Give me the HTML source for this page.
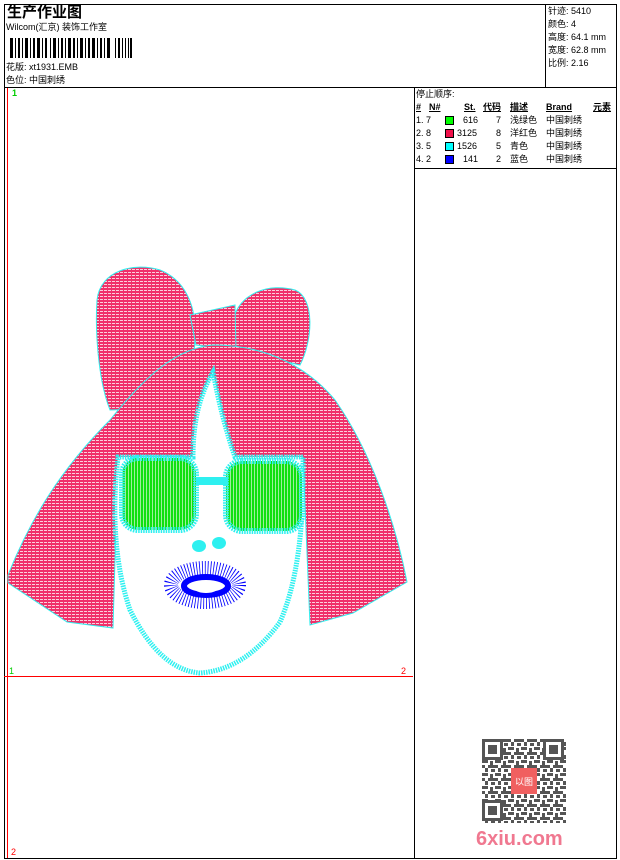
<!DOCTYPE html>
<html><head><meta charset="utf-8"><style>
*{margin:0;padding:0}
body{width:620px;height:860px;background:#fff;position:relative;overflow:hidden;font-family:"Liberation Sans","WenQuanYi Zen Hei","Noto Sans CJK SC",sans-serif;font-size:9px;color:#000}
.a{position:absolute;white-space:nowrap;line-height:11px}
.l{position:absolute;background:#000}
.r{position:absolute;background:#f00}
.u{text-decoration:underline;font-weight:bold}
.sw{position:absolute;width:9px;height:9px;border:1px solid #000;box-sizing:border-box}
</style></head><body>
<div class="l" style="left:4px;top:4px;width:613px;height:1px"></div>
<div class="l" style="left:4px;top:858px;width:613px;height:1px"></div>
<div class="l" style="left:4px;top:4px;width:1px;height:855px"></div>
<div class="l" style="left:616px;top:4px;width:1px;height:855px"></div>
<div class="l" style="left:4px;top:87px;width:613px;height:1px"></div>
<div class="l" style="left:545px;top:4px;width:1px;height:83px"></div>
<div class="l" style="left:414px;top:87px;width:1px;height:772px"></div>
<div class="l" style="left:414px;top:168px;width:203px;height:1px"></div>
<div class="r" style="left:7px;top:88px;width:1px;height:770px"></div>
<div class="r" style="left:4px;top:676px;width:409px;height:1px"></div>
<div class="a" style="left:12px;top:88px;color:#0c0;font-weight:bold">1</div>
<div class="a" style="left:9px;top:666px;color:#0c0">1</div>
<div class="a" style="left:401px;top:666px;color:#f00">2</div>
<div class="a" style="left:11px;top:847px;color:#f00">2</div>
<div class="a" style="left:7px;top:4px;font-size:15px;line-height:17px;font-weight:bold">生产作业图</div>
<div class="a" style="left:6px;top:22px">Wilcom(汇京) 装饰工作室</div>
<svg style="position:absolute;left:10px;top:38px" width="122" height="20">
<g fill="#000">
<rect x="0" y="0" width="3" height="20"/><rect x="5" y="0" width="1" height="20"/><rect x="8" y="0" width="2" height="20"/><rect x="12" y="0" width="1" height="20"/><rect x="15" y="0" width="3" height="20"/><rect x="20" y="0" width="1" height="20"/><rect x="23" y="0" width="2" height="20"/><rect x="27" y="0" width="3" height="20"/><rect x="32" y="0" width="1" height="20"/><rect x="35" y="0" width="2" height="20"/><rect x="40" y="0" width="1" height="20"/><rect x="43" y="0" width="3" height="20"/><rect x="48" y="0" width="1" height="20"/><rect x="51" y="0" width="2" height="20"/><rect x="55" y="0" width="1" height="20"/><rect x="58" y="0" width="3" height="20"/><rect x="63" y="0" width="2" height="20"/><rect x="67" y="0" width="1" height="20"/><rect x="70" y="0" width="3" height="20"/><rect x="75" y="0" width="1" height="20"/><rect x="78" y="0" width="2" height="20"/><rect x="82" y="0" width="3" height="20"/><rect x="87" y="0" width="1" height="20"/><rect x="90" y="0" width="2" height="20"/><rect x="94" y="0" width="1" height="20"/><rect x="97" y="0" width="3" height="20"/><rect x="105" y="0" width="1" height="20"/><rect x="108" y="0" width="2" height="20"/><rect x="112" y="0" width="1" height="20"/><rect x="115" y="0" width="1" height="20"/><rect x="118" y="0" width="1" height="20"/><rect x="120" y="0" width="2" height="20"/>
</g></svg>
<div class="a" style="left:6px;top:62px">花版: xt1931.EMB</div>
<div class="a" style="left:6px;top:75px">色位: 中国刺绣</div>
<div class="a" style="left:548px;top:6px">针迹: 5410</div>
<div class="a" style="left:548px;top:19px">颜色: 4</div>
<div class="a" style="left:548px;top:32px">高度: 64.1 mm</div>
<div class="a" style="left:548px;top:45px">宽度: 62.8 mm</div>
<div class="a" style="left:548px;top:58px">比例: 2.16</div>
<div class="a" style="left:416px;top:89px">停止顺序:</div>
<div class="a u" style="left:416px;top:102px">#</div>
<div class="a u" style="left:429px;top:102px">N#</div>
<div class="a u" style="left:464px;top:102px">St.</div>
<div class="a u" style="left:483px;top:102px">代码</div>
<div class="a u" style="left:510px;top:102px">描述</div>
<div class="a u" style="left:546px;top:102px">Brand</div>
<div class="a u" style="left:593px;top:102px">元素</div>
<div class="a" style="left:416px;top:115px">1. 7</div><div class="sw" style="left:445px;top:116px;background:#0f0"></div><div class="a" style="left:463px;top:115px">616</div><div class="a" style="left:496px;top:115px">7</div><div class="a" style="left:510px;top:115px">浅绿色</div><div class="a" style="left:546px;top:115px">中国刺绣</div>
<div class="a" style="left:416px;top:128px">2. 8</div><div class="sw" style="left:445px;top:129px;background:#f0104a"></div><div class="a" style="left:457px;top:128px">3125</div><div class="a" style="left:496px;top:128px">8</div><div class="a" style="left:510px;top:128px">洋红色</div><div class="a" style="left:546px;top:128px">中国刺绣</div>
<div class="a" style="left:416px;top:141px">3. 5</div><div class="sw" style="left:445px;top:142px;background:#0ff"></div><div class="a" style="left:457px;top:141px">1526</div><div class="a" style="left:496px;top:141px">5</div><div class="a" style="left:510px;top:141px">青色</div><div class="a" style="left:546px;top:141px">中国刺绣</div>
<div class="a" style="left:416px;top:154px">4. 2</div><div class="sw" style="left:445px;top:155px;background:#00f"></div><div class="a" style="left:463px;top:154px">141</div><div class="a" style="left:496px;top:154px">2</div><div class="a" style="left:510px;top:154px">蓝色</div><div class="a" style="left:546px;top:154px">中国刺绣</div>
<svg style="position:absolute;left:0;top:0" width="620" height="860">
<defs>
<pattern id="h" width="4" height="3" patternUnits="userSpaceOnUse"><rect width="4" height="3" fill="#f0306a"/><rect x="0" y="2" width="3" height="1" fill="#fbd0dc"/></pattern>
<pattern id="g" width="3" height="4" patternUnits="userSpaceOnUse"><rect width="3" height="4" fill="#10e010"/><rect x="2" width="1" height="4" fill="#9df09d"/></pattern>
</defs>
<g fill="url(#h)" stroke="#3ee" stroke-width="1">
<path d="M97,300 C100,270 135,262 160,270 C185,280 195,305 195,330 C195,370 190,400 170,408 L110,410 C98,380 95,330 97,300Z"/>
<path d="M233,320 C240,292 270,283 295,290 C315,298 313,340 300,365 L235,350Z"/>
<path d="M190,315 L235,305 L236,350 L196,345Z"/>
<path d="M8,575 C30,520 60,470 110,420 C150,370 180,348 213,345 C270,345 310,370 335,400 C370,450 395,520 407,582 L353,613 L310,625 L303,457 L235,457 C222,420 218,390 213,372 C200,390 195,420 193,457 L118,457 L113,628 L67,622 L8,583Z"/>
</g>
<path d="M213,372 C200,395 193,420 193,457 L118,457 Q108,545 130,610 Q160,670 200,673 Q245,670 280,622 Q305,565 303,457 L235,457 Q222,420 213,372Z" fill="#fff" stroke="#2ef0f0" stroke-width="5" stroke-dasharray="1.5 1"/>
<rect x="122" y="458" width="74" height="72" rx="16" fill="url(#g)" stroke="#2ef0f0" stroke-width="6" stroke-dasharray="1.5 1"/>
<rect x="226" y="461" width="76" height="70" rx="16" fill="url(#g)" stroke="#2ef0f0" stroke-width="6" stroke-dasharray="1.5 1"/>
<rect x="196" y="477" width="32" height="8" fill="#2ef0f0"/>
<ellipse cx="199" cy="546" rx="7" ry="6" fill="#2ef0f0"/>
<ellipse cx="219" cy="543" rx="7" ry="6" fill="#2ef0f0"/>
<ellipse cx="205" cy="585" rx="34" ry="17" fill="none" stroke="#00f" stroke-width="14" stroke-dasharray="0.8 2"/>
<ellipse cx="206" cy="586" rx="22" ry="9" fill="none" stroke="#00f" stroke-width="6"/>
<ellipse cx="206" cy="588" rx="12" ry="5" fill="#fff"/>
</svg>
<svg style="position:absolute;left:482px;top:739px" width="84" height="84">
<defs><pattern id="q" width="13" height="13" patternUnits="userSpaceOnUse"><rect width="13" height="13" fill="#fff"/><g fill="#555"><rect x="0" y="0" width="3" height="3"/><rect x="6" y="0" width="7" height="3"/><rect x="3" y="3" width="3" height="4"/><rect x="9" y="4" width="4" height="3"/><rect x="0" y="8" width="6" height="3"/><rect x="8" y="9" width="3" height="4"/></g></pattern></defs>
<rect width="84" height="84" fill="url(#q)"/>
<g fill="#fff" stroke="#555" stroke-width="3"><rect x="1.5" y="1.5" width="18" height="18"/><rect x="62.5" y="1.5" width="18" height="18"/><rect x="1.5" y="62.5" width="18" height="18"/></g>
<g fill="#555"><rect x="6" y="6" width="9" height="9"/><rect x="67" y="6" width="9" height="9"/><rect x="6" y="67" width="9" height="9"/></g>
<rect x="29" y="29" width="26" height="26" fill="#f06060"/>
<text x="42" y="46" font-size="9" fill="#fff" text-anchor="middle">以图</text>
</svg>
<div class="a" style="left:476px;top:828px;font-size:20px;line-height:22px;font-weight:bold;color:#f07890">6xiu.com</div>
</body></html>
